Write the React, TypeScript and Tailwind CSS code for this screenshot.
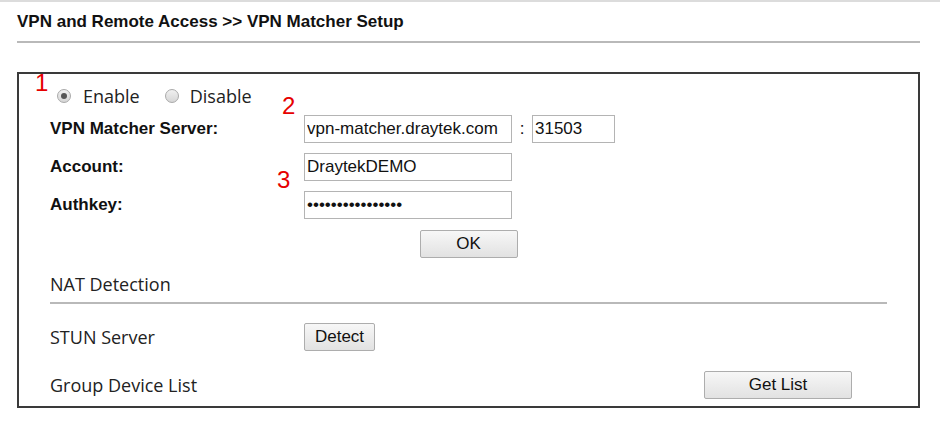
import React from 'react';

const arial = "font-['Liberation_Sans',Arial,sans-serif]";
const soft = "font-['Open_Sans','DejaVu_Sans',sans-serif]";

function Radio({ checked }: { checked?: boolean }) {
  return (
    <span className="relative inline-flex w-[14px] h-[14px] rounded-full border border-[#a9a9a9] bg-gradient-to-b from-[#f0f0f0] to-[#d6d6d6] items-center justify-center">
      {checked && <span className="w-[6px] h-[6px] rounded-full bg-[#555]" />}
    </span>
  );
}

function TextBox({ value, width, password }: { value: string; width: string; password?: boolean }) {
  return (
    <input
      readOnly
      type={password ? 'password' : 'text'}
      value={value}
      className={`${width} h-[28px] border border-[#b4b4b4] bg-white px-[2px] text-[17px] text-[#111] outline-none ${arial}`}
    />
  );
}

function Btn({ label, width }: { label: string; width: string }) {
  return (
    <button
      className={`${width} h-[28px] border border-[#adadad] rounded-[2px] bg-gradient-to-b from-[#f7f7f7] to-[#e2e2e2] text-[17px] text-[#111] ${arial}`}
    >
      {label}
    </button>
  );
}

export default function App() {
  return (
    <div className="w-[940px] h-[428px] bg-white border-t-2 border-[#dcdcdc] overflow-hidden">
      <div className="px-[17px] pr-[20px]">
        {/* Header */}
        <div className={`h-[39px] flex items-center pt-[1px] text-[17px] font-bold text-[#111] ${arial}`}>
          VPN and Remote Access &gt;&gt; VPN Matcher Setup
        </div>
        <div className="h-[2px] bg-[#b9b9b9]" />

        {/* Main box */}
        <div className="relative mt-[29px] border-2 border-[#3a3a3a] pl-[31px] pr-[31px] pt-[10px] pb-[7px] flex flex-col">
          <span className={`absolute left-[16px] top-[-3px] text-[24px] leading-none text-[#e60000] ${arial}`}>1</span>
          <span className={`absolute left-[263px] top-[20px] text-[24px] leading-none text-[#e60000] ${arial}`}>2</span>
          <span className={`absolute left-[258px] top-[94px] text-[24px] leading-none text-[#e60000] ${arial}`}>3</span>

          {/* Enable / Disable */}
          <div className={`h-[24px] flex items-center text-[18px] text-[#222] ${soft}`}>
            <span className="ml-[7px] flex"><Radio checked /></span>
            <span className="ml-[12px]">Enable</span>
            <span className="ml-[25px] flex"><Radio /></span>
            <span className="ml-[11px]">Disable</span>
          </div>

          {/* Server */}
          <div className="mt-[7px] flex flex-col gap-[10px]">
            <div className="flex items-center">
              <div className={`w-[254px] text-[17px] font-bold text-[#111] ${arial}`}>VPN Matcher Server:</div>
              <TextBox value="vpn-matcher.draytek.com" width="w-[208px]" />
              <span className={`w-[20px] text-center text-[17px] text-[#111] ${arial}`}>:</span>
              <TextBox value="31503" width="w-[83px]" />
            </div>
            <div className="flex items-center">
              <div className={`w-[254px] text-[17px] font-bold text-[#111] ${arial}`}>Account:</div>
              <TextBox value="DraytekDEMO" width="w-[208px]" />
            </div>
            <div className="flex items-center">
              <div className={`w-[254px] text-[17px] font-bold text-[#111] ${arial}`}>Authkey:</div>
              <TextBox value="draytekdemo12345" width="w-[208px]" password />
            </div>
          </div>

          <div className="mt-[11px] flex justify-center">
            <Btn label="OK" width="w-[98px]" />
          </div>

          {/* NAT Detection */}
          <div className={`mt-[14px] h-[24px] flex items-center text-[18px] text-[#222] ${soft}`}>NAT Detection</div>
          <div className="mt-[6px] h-[2px] bg-[#b9b9b9]" />

          <div className="mt-[19px] flex items-center">
            <div className={`w-[254px] text-[18px] text-[#222] ${soft}`}>STUN Server</div>
            <Btn label="Detect" width="w-[71px]" />
          </div>

          <div className="mt-[20px] flex items-center">
            <div className={`w-[254px] text-[18px] text-[#222] ${soft}`}>Group Device List</div>
            <div className="ml-[400px]">
              <Btn label="Get List" width="w-[148px]" />
            </div>
          </div>
        </div>
      </div>
    </div>
  );
}
